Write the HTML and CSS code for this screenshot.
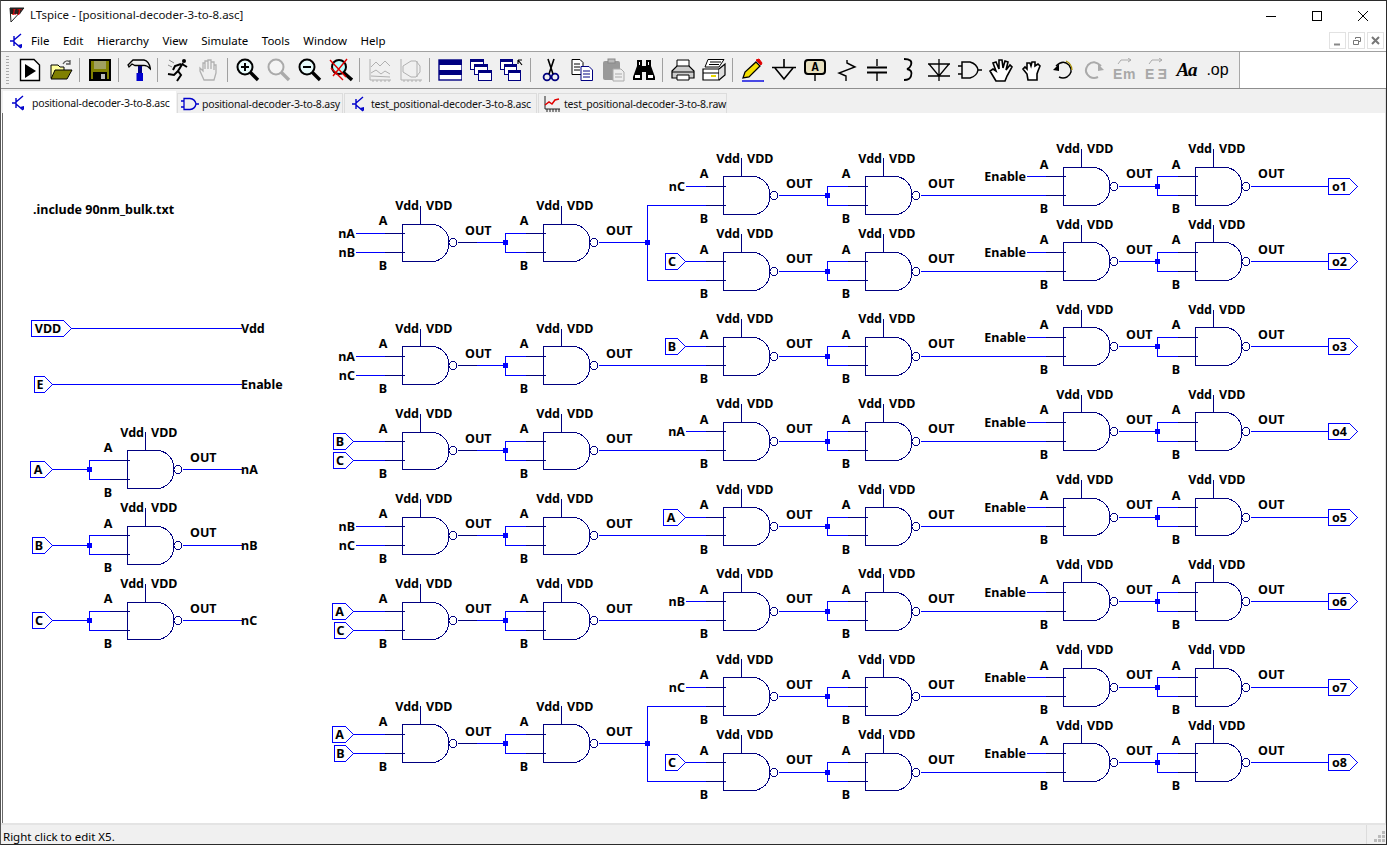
FILE: index.html
```html
<!DOCTYPE html>
<html lang="en">
<head>
  <meta charset="UTF-8" />
  <title>LTspice - [positional-decoder-3-to-8.asc]</title>
  <link rel="stylesheet" href="styles.css">
</head>
<body>
  <div class="window">
    <header class="titlebar">
      <svg class="logo" width="16" height="16" viewBox="0 0 16 16">
        <path d="M1 1H15L2 15Z" fill="#fff" stroke="#222" />
        <path d="M1 1H15L11 7H1Z" fill="#222" />
        <text x="3" y="7.5" class="logo-text">LT</text>
      </svg>
      <span class="title">LTspice - [positional-decoder-3-to-8.asc]</span>
      <div class="winbtns">
        <span class="winbtn"><svg width="46" height="30"><path d="M18 15.5H28" stroke="#000" /></svg></span>
        <span class="winbtn"><svg width="46" height="30"><rect x="18.5" y="10.5" width="9" height="9" fill="none" stroke="#000" /></svg></span>
        <span class="winbtn"><svg width="46" height="30"><path d="M18 10L28 20M28 10L18 20" stroke="#000" /></svg></span>
      </div>
    </header>

    <nav class="menubar">
      <svg class="spice" width="14" height="16" viewBox="0 0 14 16">
        <path d="M0 8H4M4 3V13M4 7L11 1M4 9L11 15" fill="none" stroke="#00c" stroke-width="1.4" />
        <path d="M8 12L12 15L12 11Z" fill="#00c" />
      </svg>
      <div class="menus">
        <span>File</span><span>Edit</span><span>Hierarchy</span><span>View</span><span>Simulate</span><span>Tools</span><span>Window</span><span>Help</span>
      </div>
      <div class="mdibtns">
        <span class="mdibtn"><svg width="10" height="10"><path d="M1 8.5H7" stroke="#888" stroke-width="2" /></svg></span>
        <span class="mdibtn"><svg width="10" height="10"><path d="M1.5 4.5H6.5V8.5H1.5ZM3.5 3V1.5H8.5V5.5H7" fill="none" stroke="#777" /></svg></span>
        <span class="mdibtn"><svg width="10" height="10"><path d="M1 1L8 8M8 1L1 8" stroke="#777" stroke-width="2" /></svg></span>
      </div>
    </nav>

    <div class="toolstrip">
      <div class="toolbar">
        <span class="grip"></span>
        <span class="tool"><svg width="24" height="24"><path d="M2.5 1.5H16L21.5 7V22.5H2.5Z" fill="#fff" stroke="#000" stroke-width="1.4" /><path d="M7 6L18 13L7 20Z" /></svg></span>
        <span class="tool"><svg width="24" height="24"><path d="M2 20V7H9L11 9H15V20Z" fill="#ffff9c" stroke="#000" /><path d="M2 21L6 12H23L18 21Z" fill="#808000" stroke="#000" /><path d="M14 6Q17 1 21 4M21 2V6H17" fill="none" stroke="#555" stroke-width="1.3" /></svg></span>
        <span class="sep"></span>
        <span class="tool"><svg width="24" height="24"><path d="M2 2H22V22H2Z" fill="#808000" stroke="#000" stroke-width="2" /><rect x="6" y="3" width="12" height="8" fill="#a0a060" /><rect x="5" y="14" width="14" height="8" /><rect x="13" y="16" width="4" height="5" fill="#bbb" /></svg></span>
        <span class="sep"></span>
        <span class="tool"><svg width="24" height="24"><path d="M1 7L6 2H17Q22 3 23.5 11Q20 7 16 7.5H8L5 6L2 9Z" fill="#eee" stroke="#000" stroke-width="1.3" /><rect x="11" y="8" width="4" height="7" fill="#000080" /><rect x="9.5" y="15" width="6.5" height="8" fill="#0000d0" /></svg></span>
        <span class="sep"></span>
        <span class="tool"><svg width="24" height="24"><circle cx="18" cy="3" r="2" /><path d="M17 5L12 13L15 17L11 23M16 6L21 9M15 6L9 8L7 12M12 13L8 17L2 16" fill="none" stroke="#000" stroke-width="2" /><path d="M3 2L8 5M2 7L6 9" stroke="#888" /></svg></span>
        <span class="tool"><svg width="24" height="24"><path d="M7 22L3 13V10L6 13V5H8V11V3H11V11V2H14V11V4H17V12V7H19V15L17 22Z" fill="#f0f0f0" stroke="#b0b0b0" stroke-width="1.3" /></svg></span>
        <span class="sep"></span>
        <span class="tool"><svg width="24" height="24"><circle cx="9" cy="9" r="7.5" fill="#e8fbfb" stroke="#000" stroke-width="2" /><path d="M5 9H13M9 5V13" stroke="#000" stroke-width="2" /><path d="M14 14L22 22" stroke="#000" stroke-width="3.4" /></svg></span>
        <span class="tool"><svg width="24" height="24"><circle cx="9" cy="9" r="7.5" fill="#f4f4f4" stroke="#aaa" stroke-width="2" /><path d="M14 14L22 22" stroke="#aaa" stroke-width="3.4" /></svg></span>
        <span class="tool"><svg width="24" height="24"><circle cx="9" cy="9" r="7.5" fill="#e8fbfb" stroke="#000" stroke-width="2" /><path d="M5 9H13" stroke="#000" stroke-width="2" /><path d="M14 14L22 22" stroke="#000" stroke-width="3.4" /></svg></span>
        <span class="tool"><svg width="24" height="24"><circle cx="10" cy="9" r="7" fill="#bff" stroke="#000" stroke-width="2" /><path d="M14 14L23 22" stroke="#000" stroke-width="3.4" /><path d="M1 2L17 19M18 1L4 18M2 10L14 22" stroke="#e00000" stroke-width="1.4" /></svg></span>
        <span class="sep"></span>
        <span class="tool"><svg width="24" height="24" class="dim"><path d="M2 1V22H23M5 22V24M9 22V24M13 22V24M17 22V24M21 22V24" fill="none" /><path d="M3 9L8 4L12 8L17 3L22 8M3 15L8 12L13 16L17 13L22 16M3 18L22 19" fill="none" /></svg></span>
        <span class="tool"><svg width="24" height="24" class="dim"><path d="M2 1V22H23M5 22V24M9 22V24M13 22V24M17 22V24M21 22V24" fill="none" /><path d="M4 8L12 3H17L21 8V14L17 19H12L4 14ZM18 3V19" fill="none" /></svg></span>
        <span class="sep"></span>
        <span class="tool"><svg width="24" height="24"><rect x="1" y="2" width="23" height="20" fill="#fff" stroke="#000080" stroke-width="1.4" /><rect x="1" y="2" width="23" height="5" fill="#000080" /><rect x="1" y="12" width="23" height="5" fill="#000080" /></svg></span>
        <span class="tool"><svg width="24" height="24"><g fill="#fff" stroke="#000080"><rect x="1.5" y="1.5" width="13" height="10" /><rect x="5.5" y="6.5" width="13" height="10" /><rect x="9.5" y="12.5" width="13" height="10" /></g><g fill="#000080"><rect x="1" y="1" width="14" height="3" /><rect x="5" y="6" width="14" height="3" /><rect x="9" y="12" width="14" height="3" /></g></svg></span>
        <span class="tool"><svg width="24" height="24"><g fill="#fff" stroke="#000080"><rect x="0.5" y="1.5" width="12" height="10" /><rect x="4.5" y="6.5" width="12" height="10" /><rect x="8.5" y="12.5" width="12" height="10" /></g><g fill="#000080"><rect x="0" y="1" width="13" height="3" /><rect x="4" y="6" width="13" height="3" /><rect x="8" y="12" width="13" height="3" /></g><path d="M22 7L18 2M18 2V6M18 2H22" fill="none" stroke="#000" stroke-width="1.2" /></svg></span>
        <span class="sep"></span>
        <span class="tool"><svg width="24" height="24"><circle cx="8" cy="19" r="3.4" fill="none" stroke="#000080" stroke-width="1.8" /><circle cx="16" cy="19" r="3.4" fill="none" stroke="#000080" stroke-width="1.8" /><path d="M10 16L15 1M14 16L9 1" stroke="#000" stroke-width="1.6" /></svg></span>
        <span class="tool"><svg width="24" height="24"><path d="M2 1.5H10L13 4.5V16.5H2Z" fill="#fff" stroke="#000" /><path d="M4 6H10M4 9H10M4 12H10" stroke="#000" /><path d="M11 8.5H19L22.5 12V22.5H11Z" fill="#fff" stroke="#000080" /><path d="M13 13H20M13 16H20M13 19H20" stroke="#000080" /></svg></span>
        <span class="tool"><svg width="24" height="24"><rect x="2" y="3" width="17" height="19" rx="2" fill="#999" /><rect x="7" y="1" width="7" height="4" fill="#bbb" stroke="#888" /><path d="M12 11H20L23 14V23H12Z" fill="#eee" stroke="#aaa" /><path d="M14 16H21M14 19H21" stroke="#aaa" /></svg></span>
        <span class="tool"><svg width="24" height="24"><path d="M5 2H10V8H14V2H19V8L23 19V22H14V14H10V22H1V19L5 8Z" /><rect x="3" y="17" width="5" height="3" fill="#fff" /><rect x="16" y="17" width="5" height="3" fill="#fff" /><rect x="7" y="4" width="1" height="3" fill="#fff" /><rect x="16" y="4" width="1" height="3" fill="#fff" /></svg></span>
        <span class="sep"></span>
        <span class="tool"><svg width="24" height="24"><path d="M6 2H18V9H6Z" fill="#fff" stroke="#000" /><path d="M1 13L6 8H18L23 13V20H1Z" fill="#ccc" stroke="#000" stroke-width="1.2" /><path d="M1 14H23" stroke="#000" /><path d="M6 17H18V22H6Z" fill="#fff" stroke="#000" /></svg></span>
        <span class="tool"><svg width="24" height="24"><path d="M6 1.5H22L17 9H3Z" fill="#fff" stroke="#000" /><path d="M8 4H19M7 6.5H17" stroke="#000" /><path d="M1 11H17V22H1Z" fill="#fff" stroke="#000" stroke-width="1.2" /><path d="M17 11L23 6V17L17 22" fill="#ddd" stroke="#000" stroke-width="1.2" /><path d="M1 15H17" stroke="#000" /><rect x="9" y="17" width="5" height="2" fill="#e8d800" /></svg></span>
        <span class="sep"></span>
        <span class="tool"><svg width="24" height="24"><path d="M15 4L19 8L8 19L2 20L4 14Z" fill="#f4e000" stroke="#000" stroke-width="1.3" /><path d="M15 2L20 7L21 5L18 1Z" fill="#e00000" stroke="#e00000" /><path d="M1 23H23" stroke="#0000e0" stroke-width="1.4" /></svg></span>
        <span class="tool"><svg width="24" height="24"><path d="M12 1V9M0 9.5H24M3 10L12 21L21 10" fill="none" stroke="#000" stroke-width="1.6" /></svg></span>
        <span class="tool"><svg width="24" height="24"><rect x="2" y="2" width="20" height="14" rx="3" fill="#e8e0c0" stroke="#000" stroke-width="2" /><text x="12" y="13" class="glyph-a">A</text><path d="M12 16V23" stroke="#000" stroke-width="1.4" /></svg></span>
        <span class="tool"><svg width="24" height="24"><path d="M13 2V5L21 9L5 15L12 18V23" fill="none" stroke="#000" stroke-width="1.4" /></svg></span>
        <span class="tool"><svg width="24" height="24"><path d="M12 1V8M12 15V23" stroke="#000" stroke-width="1.4" /><path d="M2 9.5H22M2 14.5H22" stroke="#000" stroke-width="2.2" /></svg></span>
        <span class="tool"><svg width="24" height="24"><path d="M8 1Q17 1 15 7Q14 10 11 11Q17 12 15 18Q14 22 8 22" fill="none" stroke="#000" stroke-width="1.8" /></svg></span>
        <span class="tool"><svg width="24" height="24"><path d="M12 1V23M1 6H23M1 18H23M2 6L12 18L22 6" fill="none" stroke="#000" stroke-width="1.3" /></svg></span>
        <span class="tool"><svg width="24" height="24"><path d="M0 8H4M0 16H4M4 4H12Q19 6 20 12Q19 18 12 20H4ZM20 12H24" fill="none" stroke="#000" stroke-width="1.5" /></svg></span>
        <span class="tool"><svg width="24" height="24"><path d="M7 23L1 13L4 11L7 13L4 5L7 4L10 11L10 2L13 2L14 10L16 3L19 4L17 12L21 7L23 9L18 18L16 23Z" fill="#fff" stroke="#000" stroke-width="1.6" /></svg></span>
        <span class="tool"><svg width="24" height="24"><path d="M8 22L7 16L3 11L5 9L7 11L7 5L10 5L11 8L12 4L15 4L15 8L18 6L20 8L18 13L17 16V22Z" fill="#fff" stroke="#000" stroke-width="1.6" /></svg></span>
        <span class="tool"><svg width="24" height="24"><path d="M5 8Q12 1 18 7Q23 14 16 19Q12 21 8 19" fill="none" stroke="#000" stroke-width="1.4" /><path d="M15 3Q21 6 21 12" fill="none" stroke="#a89000" stroke-width="1.2" /><path d="M2 12L8 6V13Z" /></svg></span>
        <span class="tool"><svg width="24" height="24"><path d="M19 8Q12 1 6 7Q1 14 8 19Q12 21 16 19" fill="none" stroke="#aaa" stroke-width="2" /><path d="M22 12L16 6V13Z" fill="#aaa" /></svg></span>
        <span class="tool"><svg width="24" height="24"><path d="M5 6L8 2H18M15 0L18 2L15 4" fill="none" stroke="#aaa" /><text x="0" y="21" class="glyph-e">E</text><text x="10" y="21" class="glyph-e">m</text></svg></span>
        <span class="tool"><svg width="24" height="24"><path d="M5 6L8 2H18M15 0L18 2L15 4" fill="none" stroke="#aaa" /><text x="1" y="21" class="glyph-e">E</text><text x="1" y="21" class="glyph-e" transform="translate(24 0) scale(-1 1)">E</text></svg></span>
        <span class="tool"><span class="aa">Aa</span></span>
        <span class="tool"><span class="op">.op</span></span>
      </div>
    </div>

    <div class="tabs">
      <span class="tab tab-active tab-a">
        <svg width="14" height="16" viewBox="0 0 14 16"><path d="M0 8H4M4 3V13M4 7L11 1M4 9L11 15" fill="none" stroke="#00c" stroke-width="1.4" /><path d="M8 12L12 15L12 11Z" fill="#00c" /></svg>
        positional-decoder-3-to-8.asc
      </span>
      <span class="tab tab-b">
        <svg width="18" height="14" viewBox="0 0 18 14"><path d="M0 4H3M0 10H3M3 1.5H9Q14 2 15 7Q14 12 9 12.5H3ZM15 7H18" fill="none" stroke="#00c" stroke-width="1.3" /></svg>
        positional-decoder-3-to-8.asy
      </span>
      <span class="tab tab-c">
        <svg width="14" height="16" viewBox="0 0 14 16"><path d="M0 8H4M4 3V13M4 7L11 1M4 9L11 15" fill="none" stroke="#00c" stroke-width="1.4" /><path d="M8 12L12 15L12 11Z" fill="#00c" /></svg>
        test_positional-decoder-3-to-8.asc
      </span>
      <span class="tab tab-d">
        <svg width="16" height="16" viewBox="0 0 16 16"><path d="M1 0V13H16M3 13V16M6 13V16M9 13V16M12 13V16M15 13V16" fill="none" stroke="#222" /><path d="M1 9L5 6L8 8L11 4L15 3" fill="none" stroke="#e00000" stroke-width="1.5" /></svg>
        test_positional-decoder-3-to-8.raw
      </span>
    </div>

    <main class="canvas">
      <svg id="sheet" width="1382" height="710" viewBox="3 113 1382 710"></svg>
    </main>

    <footer class="status">
      <span class="status-text">Right click to edit X5.</span>
      <span class="status-end">
        <svg width="12" height="12"><path d="M9 1h3v3H9zM5 5h3v3H5zM9 5h3v3H9zM1 9h3v3H1zM5 9h3v3H5zM9 9h3v3H9z" fill="#bbb" /></svg>
      </span>
    </footer>
  </div>
  <script src="sheet.js"></script>
</body>
</html>
```

FILE: styles.css
```css
* { box-sizing: border-box; }
html, body { margin: 0; height: 845px; overflow: hidden; background: #fff; }
body { font-family: "Noto Sans", sans-serif; font-size: 11.5px; color: #000; }

.window { height: 845px; display: flex; flex-direction: column; border: 1px solid #2b2b2b; border-left-color: #555; }

.titlebar { height: 29px; display: flex; align-items: center; padding-left: 8px; background: #fff; }
.logo { margin-right: 5px; margin-top: -2px; }
.logo-text { font: italic bold 7.5px "Liberation Serif", serif; fill: #e00000; }
.title { font-size: 11.5px; color: #111; margin-top: -2px; }
.winbtns { margin-left: auto; display: flex; height: 29px; }
.winbtn { width: 46px; display: block; }

.menubar { height: 21px; display: flex; align-items: center; padding-left: 9px; background: #fff; }
.spice { flex: none; }
.menus { display: flex; gap: 13.5px; margin-left: 7px; font-size: 11.5px; }
.mdibtns { margin-left: auto; display: flex; gap: 2px; padding-right: 2px; }
.mdibtn { width: 17px; height: 17px; background: #fff; border: 1px solid #e2e2e2; display: flex; align-items: center; justify-content: center; }

.toolstrip { height: 38px; border-top: 1px solid #a0a0a0; border-bottom: 1px solid #8e8e8e; background: #fff; }
.toolbar { width: 1239px; height: 36px; background: #f0f0f0; border-right: 1px solid #a8a8a8; display: flex; align-items: center; padding-left: 5px; }
.grip { width: 3px; height: 28px; margin-right: 5px; background: repeating-linear-gradient(#aaa 0 1px, transparent 1px 3px); }
.tool { width: 31px; height: 24px; display: flex; justify-content: center; align-items: center; flex: none; }
.sep { width: 8px; height: 24px; flex: none; position: relative; }
.sep::after { content: ""; position: absolute; left: 3px; top: 0; bottom: 0; width: 1px; background: #a0a0a0; }
.dim * { stroke: #b0b0b0; }
.glyph-a { font: bold 12px "Liberation Mono", monospace; text-anchor: middle; }
.glyph-e { font: bold 14px "Liberation Sans", sans-serif; fill: #a8a8a8; }
.aa { font: italic bold 19px "Liberation Serif", serif; letter-spacing: -1px; }
.op { font: 16px "Liberation Sans", sans-serif; }

.tabs { height: 24px; background: #f0f0f0; display: flex; align-items: flex-end; padding-left: 2px; border-right: 1px solid #ddd; }
.tab { height: 20px; display: flex; align-items: center; font: 10.5px "Noto Sans", sans-serif; letter-spacing: -0.2px; color: #111; background: #f0f0f0; border: 1px solid #dcdcdc; border-bottom: 0; margin-right: 1px; white-space: nowrap; }
.tab svg { flex: none; }
.tab-active { height: 22px; background: #fff; border-color: #fff; }
.tab-a { width: 173px; padding-left: 8px; gap: 6px; }
.tab-b { width: 166px; padding-left: 3px; gap: 3px; }
.tab-c { width: 193px; padding-left: 7px; gap: 5px; }
.tab-d { width: 189px; padding-left: 5px; gap: 4px; }

.canvas { flex: 1; min-height: 0; margin-left: 1px; border-left: 1px solid #6a6a6a; border-right: 1px solid #ddd; background: #fff; overflow: hidden; }
#sheet { display: block; font: bold 12.5px "Noto Sans", sans-serif; }
#sheet text { fill: #000; }
.wire { stroke: #0000ff; fill: none; shape-rendering: crispEdges; }
.body { stroke: #000080; fill: none; shape-rendering: crispEdges; }
.junction { fill: #0000ff; shape-rendering: crispEdges; }
.port { stroke: #0000ff; fill: #fff; shape-rendering: crispEdges; }

.status { height: 21px; flex: none; border-top: 2px solid #e4e4e4; background: #f0f0f0; display: flex; align-items: center; justify-content: space-between; font-size: 11.5px; padding-left: 2px; }
.status-text { padding-top: 3px; }
.status-end { width: 20px; height: 19px; border-left: 1px solid #dcdcdc; display: flex; align-items: flex-end; justify-content: flex-end; padding: 0 1px 2px 0; }
```

FILE: sheet.js
```js
const NS = 'http://www.w3.org/2000/svg'
const sheet = document.getElementById('sheet')
// one schematic grid step in screen pixels; pins and bodies round off separately
const U = 9.44

function add(tag, attrs, text) {
  const el = document.createElementNS(NS, tag)
  for (const k in attrs) el.setAttribute(k, attrs[k])
  if (text) el.textContent = text
  sheet.appendChild(el)
  return el
}

function path(cls, d) { add('path', { class: cls, d: d }) }
function label(x, y, text, anchor) { add('text', { x: x, y: Math.round(y), 'text-anchor': anchor || 'start' }, text) }
function row(y) { return Math.floor(y) }

// polyline in screen pixels, snapped to the middle of the pixel
function wire(points, cls) {
  const d = points.map((p, i) => (i ? 'L' : 'M') + (p[0] + 0.5) + ' ' + (p[1] + 0.5)).join('')
  path(cls || 'wire', d)
}

function junction(x, y) { add('rect', { class: 'junction', x: x - 2, y: y - 2, width: 5, height: 5 }) }

function nand(x, y) {
  const xm = x + 0.5
  const top = row(y - 2 * U) + 0.5
  const bot = row(y + 2 * U) + 0.5
  const mid = row(y) + 0.5
  path('body', `M${x + 33} ${top}H${xm}V${bot}H${x + 33}`)
  path('body', `M${x + 33} ${top}C${x + 42} ${top + 3} ${x + 47} ${mid - 9} ${x + 47} ${mid}C${x + 47} ${mid + 9} ${x + 42} ${bot - 3} ${x + 33} ${bot}`)
  add('circle', { class: 'body', cx: x + 51, cy: mid, r: 4 })
  wire([[x + 18, row(y - 2 * U)], [x + 18, row(y - 4 * U)]], 'body')
  wire([[x - 18, row(y - U)], [x + 2, row(y - U)]], 'body')
  wire([[x - 18, row(y + U)], [x + 2, row(y + U)]], 'body')
  wire([[x + 55, row(y)], [x + 74, row(y)]], 'body')
  label(x + 17, y - 33, 'Vdd', 'end')
  label(x + 24, y - 33, 'VDD')
  label(x - 19, y - 17.5, 'A', 'middle')
  label(x - 19, y + 27, 'B', 'middle')
  label(x + 63, y - 8, 'OUT')
}

// port flag: left edge, tip, centre line
function port(left, tip, y, text) {
  const s = tip - 8
  path('port', `M${left + 0.5} ${y - 7.5}H${s + 0.5}L${tip + 0.5} ${y + 0.5}L${s + 0.5} ${y + 8.5}H${left + 0.5}Z`)
  add('text', { x: (left + s) / 2 + 1, y: y + 5, 'text-anchor': 'middle' }, text)
}

// gate whose two inputs are tied to one net
function tied(x, y, from) {
  const jx = x - 38
  wire([[from, row(y)], [jx, row(y)]])
  wire([[x, row(y - U)], [jx, row(y - U)], [jx, row(y + U)], [x, row(y + U)]])
  junction(jx, row(y))
}

// an input is a named net or a port flag ({ left, text })
function input(v, xEnd, xGate, y) {
  wire([[xEnd, y], [xGate, y]])
  if (typeof v === 'string') label(xEnd, y + 5, v, 'end')
  else port(v.left, xEnd, y, v.text)
}

add('text', { x: 33, y: 214 }, '.include 90nm_bulk.txt')

// rails on the left
wire([[71, 328], [241, 328]])
port(31, 71, 328, 'VDD')
label(241, 333, 'Vdd')
wire([[52, 384], [241, 384]])
port(34, 52, 384, 'E')
label(241, 389, 'Enable')

// inverters on the left
const inverters = [
  { y: 469.7, left: 30, text: 'A', out: 'nA' },
  { y: 545.4, left: 32, text: 'B', out: 'nB' },
  { y: 620.9, left: 32, text: 'C', out: 'nC' }
]
inverters.forEach(g => {
  tied(127, g.y, 52)
  nand(127, g.y)
  port(g.left, 52, row(g.y), g.text)
  wire([[182, row(g.y)], [241, row(g.y)]])
  label(241, row(g.y) + 5, g.out)
})

// first two columns
const decoders = [
  { y: 242.9, a: 'nA', b: 'nB' },
  { y: 365.8, a: 'nA', b: 'nC' },
  { y: 450.9, a: { left: 333, text: 'B' }, b: { left: 333, text: 'C' } },
  { y: 535.9, a: 'nB', b: 'nC' },
  { y: 620.9, a: { left: 332, text: 'A' }, b: { left: 334, text: 'C' } },
  { y: 743.6, a: { left: 332, text: 'A' }, b: { left: 334, text: 'B' } }
]
decoders.forEach(d => {
  const xEnd = typeof d.a === 'string' ? 355 : 353
  input(d.a, xEnd, 402, row(d.y - U))
  input(d.b, xEnd, 402, row(d.y + U))
  wire([[457, row(d.y)], [505, row(d.y)]])
  nand(402, d.y)
  tied(543, d.y, 476)
  nand(543, d.y)
})

// the two forks at the end of column two
function fork(y, upper, lower) {
  const top = row(upper + U)
  const bot = row(lower + U)
  wire([[598, row(y)], [647, row(y)]])
  wire([[723, top], [647, top], [647, bot], [723, bot]])
  junction(647, row(y))
}
fork(242.9, 195.7, 271.3)
fork(743.6, 696.6, 772)

// last four columns; y is the centre of the gates in columns three and four,
// columns five and six sit one grid step higher
const rows = [
  { y: 195.7, a: 'nC', o: 'o1' },
  { y: 271.3, a: { left: 665, text: 'C' }, o: 'o2' },
  { y: 356.2, a: { left: 665, text: 'B' }, o: 'o3', wired: true },
  { y: 441.2, a: 'nA', o: 'o4', wired: true },
  { y: 526.5, a: { left: 663, text: 'A' }, o: 'o5', wired: true },
  { y: 611.3, a: 'nB', o: 'o6', wired: true },
  { y: 696.6, a: 'nC', o: 'o7' },
  { y: 772, a: { left: 665, text: 'C' }, o: 'o8' }
]
rows.forEach(r => {
  const up = r.y - U
  input(r.a, 685, 723, row(up))
  if (r.wired) wire([[598, row(r.y + U)], [723, row(r.y + U)]])
  nand(723, r.y)
  tied(865, r.y, 778)
  nand(865, r.y)
  wire([[920, row(r.y)], [1063, row(r.y)]])
  input('Enable', 1026, 1063, row(up - U))
  nand(1063, up)
  tied(1195, up, 1118)
  nand(1195, up)
  wire([[1250, row(up)], [1328, row(up)]])
  port(1328, 1357, row(up), r.o)
})
```
